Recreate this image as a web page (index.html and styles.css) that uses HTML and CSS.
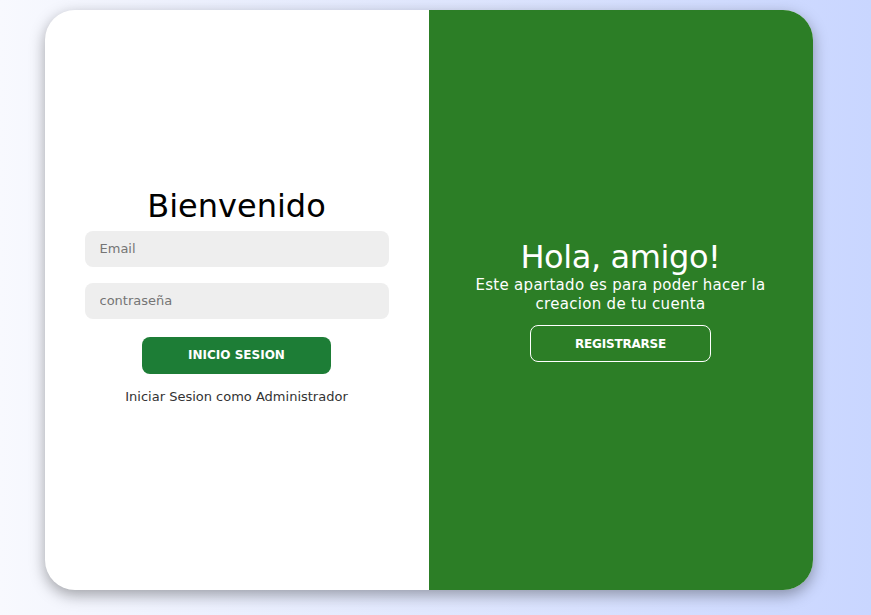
FILE: index.html
```html
<!DOCTYPE html>
<html lang="es">
<head>
<meta charset="utf-8">
<title>Login</title>
<link rel="stylesheet" href="styles.css">
</head>
<body>
<div class="container">
  <div class="panel panel-form">
    <form class="form">
      <h1 class="title">Bienvenido</h1>
      <input class="field" type="email" placeholder="Email">
      <input class="field" type="password" placeholder="contraseña">
      <button class="btn btn-solid" type="button">Inicio Sesion</button>
      <a class="link" href="#">Iniciar Sesion como Administrador</a>
    </form>
  </div>
  <div class="panel panel-toggle">
    <h1 class="title title-light">Hola, amigo!</h1>
    <p class="text">Este apartado es para poder hacer la creacion de tu cuenta</p>
    <button class="btn btn-ghost" type="button">Registrarse</button>
  </div>
</div>
</body>
</html>
```
FILE: styles.css
```css
* { box-sizing: border-box; }
html, body { margin: 0; padding: 0; }
body {
  font-family: "DejaVu Sans", "Open Sans", sans-serif;
  background: linear-gradient(to right, #f8f9fe, #c9d6ff);
  height: 615px;
  display: flex;
  justify-content: center;
  padding: 10px 14px 0 0;
}
.container {
  width: 768px;
  height: 580px;
  background: #fff;
  border-radius: 30px;
  box-shadow: 0 5px 15px rgba(0, 0, 0, 0.35);
  display: flex;
  overflow: hidden;
}
.panel {
  width: 50%;
  height: 100%;
}
.form {
  height: 100%;
  display: flex;
  flex-direction: column;
  align-items: center;
  justify-content: center;
  padding: 0 40px;
  margin: 0;
}
.title {
  margin: 0 0 -2px;
  font-size: 32px;
  font-weight: 400;
  color: #000;
  line-height: 38px;
}
.title-light {
  color: #fff;
  letter-spacing: -0.4px;
  margin: 0;
}
.field {
  width: 100%;
  background: #eee;
  border: none;
  border-radius: 8px;
  margin: 8px 0;
  padding: 10px 15px;
  font-size: 13px;
  font-family: inherit;
  height: 36px;
  outline: none;
}
.field::placeholder { color: #757575; }
.btn {
  font-family: inherit;
  font-size: 12px;
  font-weight: 700;
  letter-spacing: 0;
  text-transform: uppercase;
  color: #fff;
  border-radius: 8px;
  padding: 0 45px;
  height: 37px;
  cursor: pointer;
}
.btn-solid {
  background: #1d7d36;
  border: 1px solid transparent;
  margin-top: 10px;
}
.btn-ghost {
  background: transparent;
  border: 1px solid #fff;
  margin-top: 11px;
  padding: 0 44px;
  letter-spacing: -0.2px;
}
.link {
  color: #333;
  font-size: 13px;
  text-decoration: none;
  margin: 15px 0 10px;
}
.panel-toggle {
  background: #2c7e26;
  display: flex;
  flex-direction: column;
  align-items: center;
  justify-content: center;
  padding: 0 30px;
  text-align: center;
  color: #fff;
}
.text {
  margin: 0;
  font-size: 15px;
  line-height: 19px;
  letter-spacing: 0.3px;
}
```
